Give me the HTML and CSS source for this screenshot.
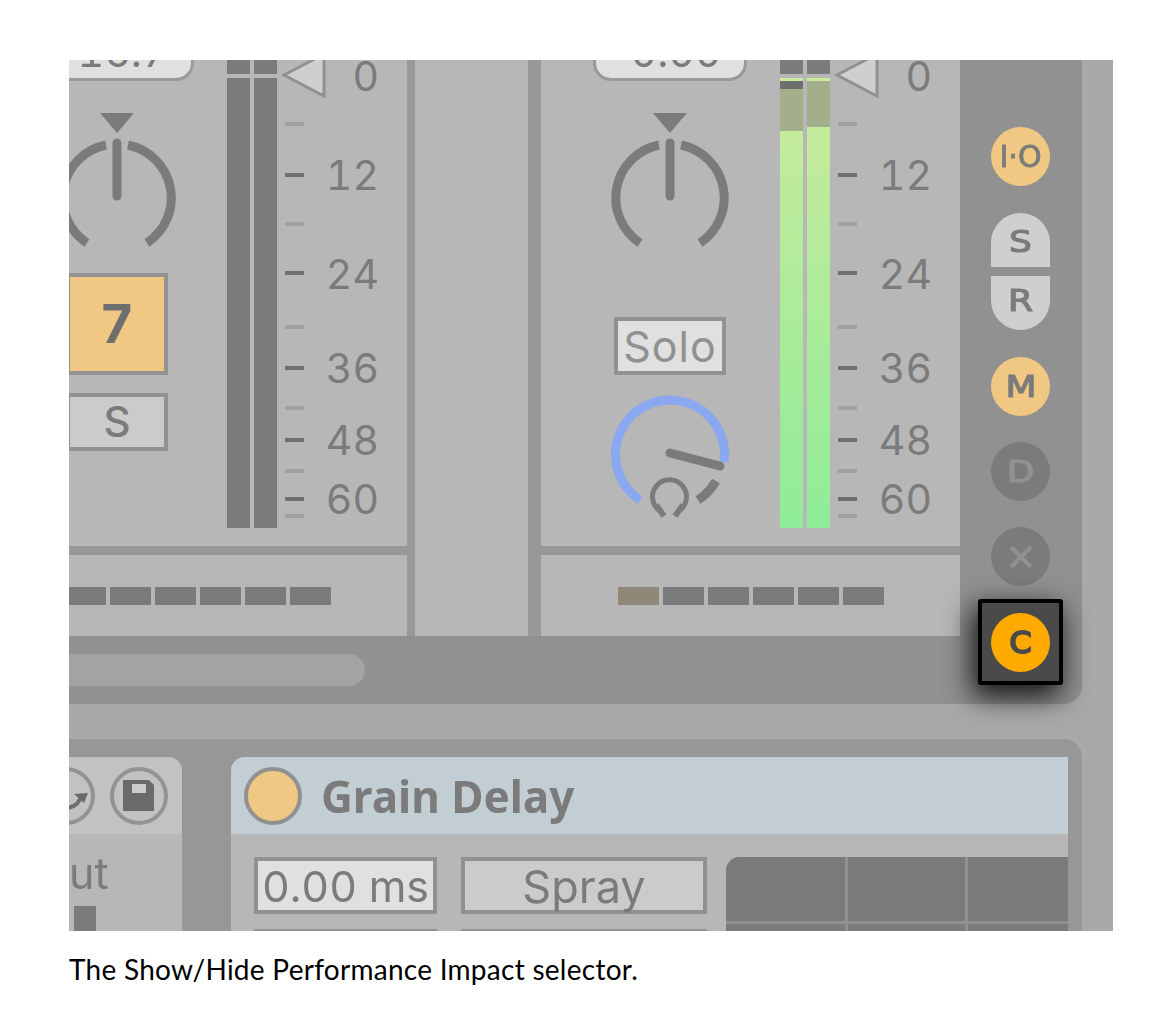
FILE: index.html
```html
<!DOCTYPE html>
<html lang="en">
<head>
    <meta charset="UTF-8">
    <meta name="viewport" content="width=device-width, initial-scale=1.0">
    <title>Show/Hide Performance Impact selector</title>
    <link rel="stylesheet" href="styles.css">
</head>
<body>
    <figure class="shot">
        <div class="shot-inner">
            <!-- mixer -->
            <section class="mixer">
                <div class="mixer-main">
                    <div class="strips">
                        <div class="strip strip-first">
                            <div class="strip-top">
                                <div class="controls">
                                    <div class="pill">16.7</div>
                                    <svg class="knob" viewBox="0 0 130 140">
                                        <path class="knob-fill" d="M48 0H82L65 20Z"/>
                                        <path class="knob-arc" d="M35 130A54 54 0 0 1 54 32M76 32A54 54 0 0 1 95 130"/>
                                        <path class="knob-needle" d="M65 30V83"/>
                                    </svg>
                                    <div class="box box-number">7</div>
                                    <div class="box box-s">S</div>
                                </div>
                                <div class="meter">
                                    <div class="channel"><div class="peak"></div><div class="level level-off"></div></div>
                                    <div class="channel"><div class="peak"></div><div class="level level-off"></div></div>
                                </div>
                                <svg class="scale" viewBox="832 60 128 486">
                                    <polygon class="gain" points="837,75 877,54 877,96"/>
                                    <path class="tick-minor" d="M838 124H857M838 224H857M838 327H857M838 408H857M838 471H857M838 516H857"/>
                                    <path class="tick-major" d="M838 175H857M838 273H857M838 368H857M838 440H857M838 499H857"/>
                                    <text x="932" y="91">0</text>
                                    <text x="932" y="190">12</text>
                                    <text x="932" y="289">24</text>
                                    <text x="932" y="383">36</text>
                                    <text x="932" y="455">48</text>
                                    <text x="932" y="514">60</text>
                                </svg>
                            </div>
                            <div class="sends">
                                <span class="send"></span><span class="send"></span><span class="send"></span>
                                <span class="send"></span><span class="send"></span><span class="send"></span>
                            </div>
                        </div>

                        <div class="strip-empty"></div>

                        <div class="strip">
                            <div class="strip-top">
                                <div class="controls">
                                    <div class="pill">0.00</div>
                                    <svg class="knob" viewBox="0 0 130 140">
                                        <path class="knob-fill" d="M48 0H82L65 20Z"/>
                                        <path class="knob-arc" d="M35 130A54 54 0 0 1 54 32M76 32A54 54 0 0 1 95 130"/>
                                        <path class="knob-needle" d="M65 30V83"/>
                                    </svg>
                                    <div class="box box-solo">Solo</div>
                                    <svg class="send-knob" viewBox="605 390 130 135">
                                        <path class="send-arc" d="M640 500A54.5 54.5 0 1 1 724 462"/>
                                        <path class="knob-arc" d="M716 481A54 54 0 0 1 698 500"/>
                                        <path class="knob-needle" d="M670 453L720 466"/>
                                        <path class="phones" d="M662 512A17 17 0 1 1 677 512"/>
                                        <path class="phones-cup" d="M656 505L664 516M683 505L675 516"/>
                                    </svg>
                                </div>
                                <div class="meter">
                                    <div class="channel">
                                        <div class="peak"></div>
                                        <div class="level"><div class="hot"></div><div class="off"></div><div class="held held-low"></div></div>
                                    </div>
                                    <div class="channel">
                                        <div class="peak"></div>
                                        <div class="level"><div class="hot"></div><div class="held held-high"></div></div>
                                    </div>
                                </div>
                                <svg class="scale" viewBox="832 60 128 486">
                                    <polygon class="gain" points="837,75 877,54 877,96"/>
                                    <path class="tick-minor" d="M838 124H857M838 224H857M838 327H857M838 408H857M838 471H857M838 516H857"/>
                                    <path class="tick-major" d="M838 175H857M838 273H857M838 368H857M838 440H857M838 499H857"/>
                                    <text x="932" y="91">0</text>
                                    <text x="932" y="190">12</text>
                                    <text x="932" y="289">24</text>
                                    <text x="932" y="383">36</text>
                                    <text x="932" y="455">48</text>
                                    <text x="932" y="514">60</text>
                                </svg>
                            </div>
                            <div class="sends">
                                <span class="send send-on"></span><span class="send"></span><span class="send"></span>
                                <span class="send"></span><span class="send"></span><span class="send"></span>
                            </div>
                        </div>
                    </div>
                    <div class="scrollbar"></div>
                </div>

                <!-- section selector on the right -->
                <div class="selector">
                    <div class="round round-on round-io">I·O</div>
                    <div class="split">
                        <div class="split-top"><span class="glyph">S</span></div>
                        <div class="split-bottom"><span class="glyph">R</span></div>
                    </div>
                    <div class="round round-on"><span class="glyph">M</span></div>
                    <div class="round round-off"><span class="glyph">D</span></div>
                    <div class="round round-off">
                        <svg class="cross" viewBox="0 0 24 24"><path d="M2 2L22 22M22 2L2 22"/></svg>
                    </div>
                    <div class="focus">
                        <div class="round round-active"><span class="glyph glyph-c">C</span></div>
                    </div>
                </div>
            </section>

            <!-- device chain -->
            <section class="rack">
                <div class="device device-left">
                    <div class="device-head head-left">
                        <svg class="round-icon" viewBox="0 0 58 58">
                            <circle class="ring" cx="29" cy="29" r="27"/>
                            <path class="hotswap" d="M28 41C38 41 43 35 45 27"/>
                            <path class="hotswap-tip" d="M37 27L51 26L47 36Z"/>
                        </svg>
                        <svg class="round-icon" viewBox="0 0 58 58">
                            <circle class="ring" cx="29" cy="29" r="27"/>
                            <path class="floppy" d="M13 13H39L44 18V44H13Z"/>
                            <rect class="floppy-label" x="22" y="17" width="14" height="9"/>
                        </svg>
                    </div>
                    <div class="left-body">
                        <div class="left-label">ut</div>
                        <div class="left-bar"></div>
                    </div>
                </div>

                <div class="device device-grain">
                    <div class="device-head head-grain">
                        <span class="device-toggle"></span>
                        <span class="device-title">Grain Delay</span>
                    </div>
                    <div class="grain-body">
                        <div class="grain-col col-time">
                            <div class="box box-time">0.00 ms</div>
                            <div class="box box-next"></div>
                        </div>
                        <div class="grain-col col-spray">
                            <div class="box box-spray">Spray</div>
                            <div class="box box-next"></div>
                        </div>
                        <div class="pad">
                            <span></span><span></span><span></span>
                            <span></span><span></span><span></span>
                        </div>
                    </div>
                </div>
            </section>
        </div>
    </figure>
    <p class="caption">The Show/Hide Performance Impact selector.</p>
</body>
</html>
```

FILE: styles.css
```css
body {
    margin: 0;
    padding: 60px 0 0 69px;
    background-color: #fff;
    font-family: 'Inter', sans-serif;
    font-variant-numeric: tabular-nums;
}

.shot {
    margin: 0;
    width: 1044px;
    height: 871px;
    overflow: hidden;
    background-color: #a9a9a9;
}

.shot-inner {
    width: 1044px;
    height: 871px;
    filter: blur(0.6px);
}

.caption {
    margin: 20px 0 0;
    font-family: 'Lato', sans-serif;
    font-size: 28px;
    line-height: 36px;
    letter-spacing: 0.27px;
    color: #000;
}

/* mixer */
.mixer {
    display: flex;
    width: 1013px;
    height: 644px;
    background-color: #919191;
    border-bottom-right-radius: 18px;
}

.mixer-main {
    width: 891px;
    flex-shrink: 0;
}

.strips {
    display: flex;
    height: 576px;
    background-color: #989898;
    overflow: hidden;
}

.strip {
    width: 419px;
    flex-shrink: 0;
}

.strip-first {
    margin-left: -81px;
    margin-right: 8px;
}

.strip-empty {
    width: 113px;
    flex-shrink: 0;
    margin-right: 13px;
    background-color: #b7b7b7;
}

.strip-top {
    display: flex;
    height: 486px;
    padding-left: 24px;
    box-sizing: border-box;
    background-color: #b7b7b7;
}

.controls {
    display: flex;
    flex-direction: column;
    align-items: center;
    width: 210px;
    flex-shrink: 0;
}

.pill {
    width: 154px;
    height: 52px;
    margin-top: -31px;
    padding-left: 12px;
    box-sizing: border-box;
    border: 3px solid #999;
    border-radius: 0 0 18px 18px;
    background-color: #e0e0e0;
    color: #7b7b7b;
    font-size: 41px;
    line-height: 41px;
    text-align: center;
}

.knob {
    display: block;
    width: 130px;
    height: 140px;
    margin-top: 32px;
    flex-shrink: 0;
}

.knob-fill {
    fill: #7b7b7b;
}

.knob-arc {
    fill: none;
    stroke: #7b7b7b;
    stroke-width: 9;
}

.knob-needle {
    fill: none;
    stroke: #7b7b7b;
    stroke-width: 9;
    stroke-linecap: round;
}

.send-knob {
    display: block;
    width: 130px;
    height: 135px;
    margin-top: 15px;
    flex-shrink: 0;
}

.send-arc {
    fill: none;
    stroke: #8aa8f0;
    stroke-width: 9;
}

.phones {
    fill: none;
    stroke: #7b7b7b;
    stroke-width: 5;
}

.phones-cup {
    fill: none;
    stroke: #7b7b7b;
    stroke-width: 6;
}

.box {
    box-sizing: border-box;
    border: 4px solid #919191;
    color: #7b7b7b;
    font-size: 43px;
    text-align: center;
    flex-shrink: 0;
}

.box-number {
    width: 102px;
    height: 102px;
    margin-top: 20px;
    background-color: #f0c883;
    font-size: 53px;
    font-weight: 700;
    line-height: 94px;
    color: #6e6e6e;
}

.box-s {
    width: 102px;
    height: 58px;
    margin-top: 18px;
    background-color: #cbcbcb;
    font-size: 42px;
    line-height: 50px;
    font-weight: 500;
}

.box-solo {
    width: 112px;
    height: 58px;
    margin-top: 64px;
    background-color: #e0e0e0;
    color: #919191;
    line-height: 50px;
    letter-spacing: 1px;
}

/* meters */
.meter {
    display: flex;
    gap: 4px;
    width: 50px;
    height: 468px;
    margin-left: 5px;
    flex-shrink: 0;
}

.channel {
    display: flex;
    flex-direction: column;
    width: 23px;
}

.peak {
    height: 14px;
    background-color: #7b7b7b;
}

.level {
    flex: 1;
    margin-top: 4px;
    background: linear-gradient(#cbeb9c, #8fec98);
}

.level-off {
    background: #7b7b7b;
}

.hot {
    height: 3px;
}

.off {
    height: 8px;
    background-color: #6f6f6f;
}

.held {
    background-color: #a3af8a;
}

.held-low {
    height: 42px;
}

.held-high {
    height: 46px;
}

.scale {
    display: block;
    width: 128px;
    height: 486px;
    margin-left: 2px;
    flex-shrink: 0;
}

.scale text {
    fill: #7b7b7b;
    font-size: 41px;
    text-anchor: end;
}

.gain {
    fill: #cfcfcf;
    stroke: #919191;
    stroke-width: 3;
}

.tick-minor {
    stroke: #a0a0a0;
    stroke-width: 4;
}

.tick-major {
    stroke: #6f6f6f;
    stroke-width: 4;
}

.sends {
    display: flex;
    gap: 4px;
    height: 81px;
    margin-top: 9px;
    padding: 32px 0 0 77px;
    box-sizing: border-box;
    background-color: #b7b7b7;
}

.send {
    width: 41px;
    height: 18px;
    background-color: #7b7b7b;
}

.send-on {
    background-color: #8f8878;
}

.scrollbar {
    width: 296px;
    height: 32px;
    margin-top: 18px;
    background-color: #a3a3a3;
    border-radius: 0 16px 16px 0;
}

/* selector column */
.selector {
    display: flex;
    flex-direction: column;
    align-items: center;
    width: 122px;
    padding: 67px 1px 0 0;
    box-sizing: border-box;
    font-family: 'DejaVu Sans', sans-serif;
    font-size: 30px;
}

.glyph {
    display: inline-block;
    transform: scaleX(1.2);
    -webkit-text-stroke: 1.2px currentColor;
}

.glyph-c {
    transform: scaleX(1.05);
    -webkit-text-stroke: 2px currentColor;
}

.round {
    display: flex;
    align-items: center;
    justify-content: center;
    width: 59px;
    height: 59px;
    margin-bottom: 26px;
    border-radius: 50%;
    flex-shrink: 0;
}

.round-on {
    background-color: #f0c883;
    color: #7b7b7b;
}

.round-io {
    margin-bottom: 27px;
    -webkit-text-stroke: 0.8px currentColor;
}

.round-off {
    background-color: #7b7b7b;
    color: #919191;
}

.round-active {
    margin: 0;
    background-color: #ffaa00;
    color: #4a4a4a;
}

.cross {
    width: 24px;
    height: 24px;
}

.cross path {
    fill: none;
    stroke: #919191;
    stroke-width: 4;
}

.split {
    width: 59px;
    margin-bottom: 27px;
    color: #7b7b7b;
}

.split-top,
.split-bottom {
    height: 54px;
    background-color: #cfcfcf;
    text-align: center;
}

.split-top {
    margin-bottom: 9px;
    border-radius: 30px 30px 0 0;
    line-height: 58px;
}

.split-bottom {
    border-radius: 0 0 30px 30px;
    line-height: 50px;
}

.focus {
    display: flex;
    align-items: center;
    justify-content: center;
    width: 85px;
    height: 86px;
    margin-top: -13px;
    box-sizing: border-box;
    flex-shrink: 0;
    border: 4px solid #000;
    border-radius: 3px;
    background-color: #4a4a4a;
    box-shadow: -4px 10px 28px 2px rgba(0, 0, 0, 0.85);
}

/* device chain */
.rack {
    display: flex;
    width: 1013px;
    height: 192px;
    margin-top: 35px;
    padding-top: 18px;
    box-sizing: border-box;
    background-color: #979797;
    border-top-right-radius: 18px;
    overflow: hidden;
}

.device {
    background-color: #b7b7b7;
    flex-shrink: 0;
    overflow: hidden;
}

.device-left {
    width: 113px;
    margin-right: 49px;
    border-top-right-radius: 14px;
}

.device-grain {
    width: 837px;
    border-top-left-radius: 14px;
}

.device-head {
    display: flex;
    align-items: center;
    height: 77px;
}

.head-left {
    justify-content: flex-end;
    gap: 15px;
    padding-right: 14px;
    background-color: #c2c2c2;
}

.round-icon {
    display: block;
    width: 58px;
    height: 58px;
    flex-shrink: 0;
}

.ring {
    fill: none;
    stroke: #939393;
    stroke-width: 4;
}

.hotswap {
    fill: none;
    stroke: #6e6e6e;
    stroke-width: 4;
}

.hotswap-tip,
.floppy {
    fill: #6a6a6a;
}

.floppy-label {
    fill: #cbcbcb;
}

.left-body {
    padding-top: 16px;
}

.left-label {
    width: 39px;
    color: #7b7b7b;
    font-size: 43px;
    line-height: 46px;
    text-align: right;
}

.left-bar {
    width: 22px;
    height: 26px;
    margin: 10px 0 0 5px;
    background-color: #7b7b7b;
}

.head-grain {
    gap: 19px;
    padding-left: 13px;
    background-color: #c2cdd4;
}

.device-toggle {
    width: 58px;
    height: 58px;
    box-sizing: border-box;
    border: 4px solid #919191;
    border-radius: 50%;
    background-color: #f0c883;
}

.device-title {
    color: #7b7b7b;
    font-family: 'Noto Sans', sans-serif;
    font-size: 44px;
    font-weight: 700;
}

.grain-body {
    display: flex;
    padding: 23px 0 0 23px;
}

.grain-col {
    flex-shrink: 0;
}

.col-time {
    width: 183px;
    margin-right: 24px;
}

.col-spray {
    width: 246px;
    margin-right: 19px;
}

.box-time,
.box-spray {
    height: 57px;
    line-height: 51px;
}

.box-time {
    background-color: #e0e0e0;
}

.box-spray {
    background-color: #cbcbcb;
    font-size: 45px;
}

.box-next {
    height: 57px;
    margin-top: 15px;
    background-color: #cbcbcb;
}

.pad {
    display: grid;
    grid-template-columns: 119px 117px 100px;
    grid-template-rows: 64px 64px;
    gap: 3px;
    width: 342px;
    border-top-left-radius: 14px;
    overflow: hidden;
    background-color: #919191;
    flex-shrink: 0;
}

.pad span {
    background-color: #7b7b7b;
}
```
